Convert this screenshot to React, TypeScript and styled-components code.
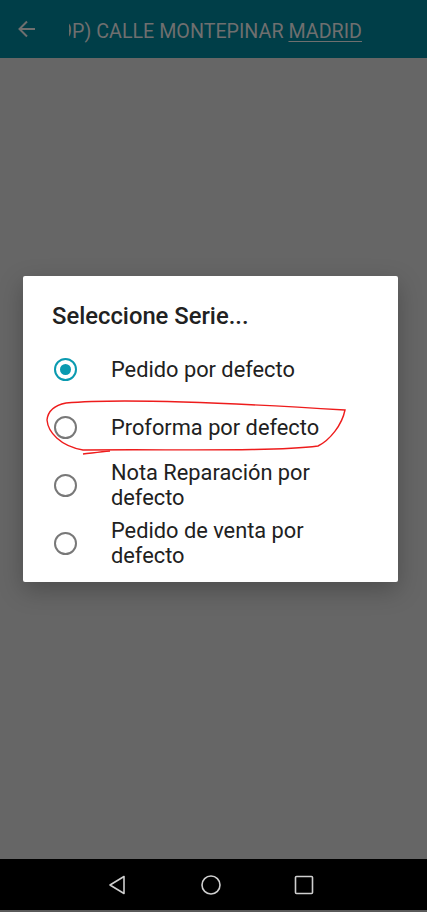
import styled, { createGlobalStyle } from "styled-components";

const GlobalStyle = createGlobalStyle`
  html, body {
    margin: 0;
    padding: 0;
    background: #666666;
  }
  body {
    font-family: Roboto, "Noto Sans", "Liberation Sans", sans-serif;
  }
`;

const Screen = styled.div`
  position: relative;
  width: 427px;
  height: 912px;
  display: flex;
  flex-direction: column;
  background: #666666;
  overflow: hidden;
`;

const TopBar = styled.div`
  height: 58px;
  flex-shrink: 0;
  background: #003e48;
  display: flex;
  align-items: center;
`;

const BackButton = styled.div`
  width: 54px;
  padding-left: 15px;
  display: flex;
  align-items: center;
  color: #6f6f6f;
`;

const TitleClip = styled.div`
  width: 300px;
  overflow: hidden;
  white-space: nowrap;
  font-size: 19.7px;
  color: #6f6f6f;
  padding-top: 4px;
`;

const TitleText = styled.span`
  display: inline-block;
  margin-left: -8px;
`;

const Underlined = styled.span`
  text-decoration: underline;
  text-underline-offset: 3px;
  text-decoration-thickness: 1px;
`;

const Main = styled.div`
  flex: 1;
  display: flex;
  justify-content: flex-start;
  align-items: flex-start;
  padding: 218px 0 0 23px;
`;

const Dialog = styled.div`
  width: 375px;
  background: #ffffff;
  border-radius: 2px;
  box-shadow: 0 8px 24px rgba(0, 0, 0, 0.25);
  padding: 27px 0 10px;
`;

const DialogTitle = styled.div`
  padding-left: 29px;
  font-size: 23.8px;
  font-weight: 500;
  line-height: 26px;
  color: #212121;
  margin-bottom: 11px;
`;

const Option = styled.div`
  height: 58px;
  display: flex;
  align-items: center;
  padding-left: 31px;
`;

const Radio = styled.div<{ $checked?: boolean }>`
  width: 23px;
  height: 23px;
  box-sizing: border-box;
  border-radius: 50%;
  border: 2.5px solid ${(p) => (p.$checked ? "#0a9ab0" : "#787878")};
  display: flex;
  align-items: center;
  justify-content: center;
  flex-shrink: 0;
  margin-right: 34px;

  &::after {
    content: "";
    display: ${(p) => (p.$checked ? "block" : "none")};
    width: 11px;
    height: 11px;
    border-radius: 50%;
    background: #0a9ab0;
  }
`;

const OptionLabel = styled.div`
  font-size: 21.8px;
  line-height: 25px;
  color: #212121;
  width: 240px;
`;

const NavBar = styled.div`
  height: 51px;
  flex-shrink: 0;
  background: #000000;
  border-bottom: 2px solid #5a5a5a;
  display: flex;
  align-items: center;
  justify-content: center;
  gap: 69px;
  padding-right: 6px;
`;

const NavIcon = styled.svg`
  width: 24px;
  height: 24px;
`;

const Annotation = styled.svg`
  position: absolute;
  left: 0;
  top: 0;
  pointer-events: none;
`;

const options = [
  { label: "Pedido por defecto", checked: true },
  { label: "Proforma por defecto" },
  { label: "Nota Reparación por defecto" },
  { label: "Pedido de venta por defecto" },
];

const App = () => {
  return (
    <Screen>
      <GlobalStyle />
      <TopBar>
        <BackButton>
          <svg width="24" height="24" viewBox="0 0 24 24">
            <path
              d="M20 12H5M12 4.5L4.5 12L12 19.5"
              fill="none"
              stroke="#6f6f6f"
              strokeWidth="2"
            />
          </svg>
        </BackButton>
        <TitleClip>
          <TitleText>
            9P) CALLE MONTEPINAR <Underlined>MADRID</Underlined>
          </TitleText>
        </TitleClip>
      </TopBar>

      <Main>
        <Dialog>
          <DialogTitle>Seleccione Serie...</DialogTitle>
          {options.map((o) => (
            <Option key={o.label}>
              <Radio $checked={o.checked} />
              <OptionLabel>{o.label}</OptionLabel>
            </Option>
          ))}
        </Dialog>
      </Main>

      <NavBar>
        <NavIcon viewBox="0 0 24 24">
          <path
            d="M18 3.5V20.5L4 12Z"
            fill="none"
            stroke="#cfcfcf"
            strokeWidth="1.6"
            strokeLinejoin="round"
          />
        </NavIcon>
        <NavIcon viewBox="0 0 24 24">
          <circle cx="12" cy="12" r="9" fill="none" stroke="#cfcfcf" strokeWidth="1.6" />
        </NavIcon>
        <NavIcon viewBox="0 0 24 24">
          <rect x="3.5" y="3.5" width="17" height="17" rx="1" fill="none" stroke="#cfcfcf" strokeWidth="1.6" />
        </NavIcon>
      </NavBar>

      <Annotation width="427" height="912" viewBox="0 0 427 912">
        <path
          d="M66 403 C 120 398, 250 404, 345 410 C 342 425, 330 440, 318 446 C 270 452, 170 449, 83 450 C 60 446, 48 432, 47 420 C 48 410, 56 405, 66 403"
          fill="none"
          stroke="#ee1c1c"
          strokeWidth="1.4"
        />
        <path d="M83 454 C 92 453, 100 452, 110 451" fill="none" stroke="#ee1c1c" strokeWidth="1.4" />
      </Annotation>
    </Screen>
  );
};

export default App;
